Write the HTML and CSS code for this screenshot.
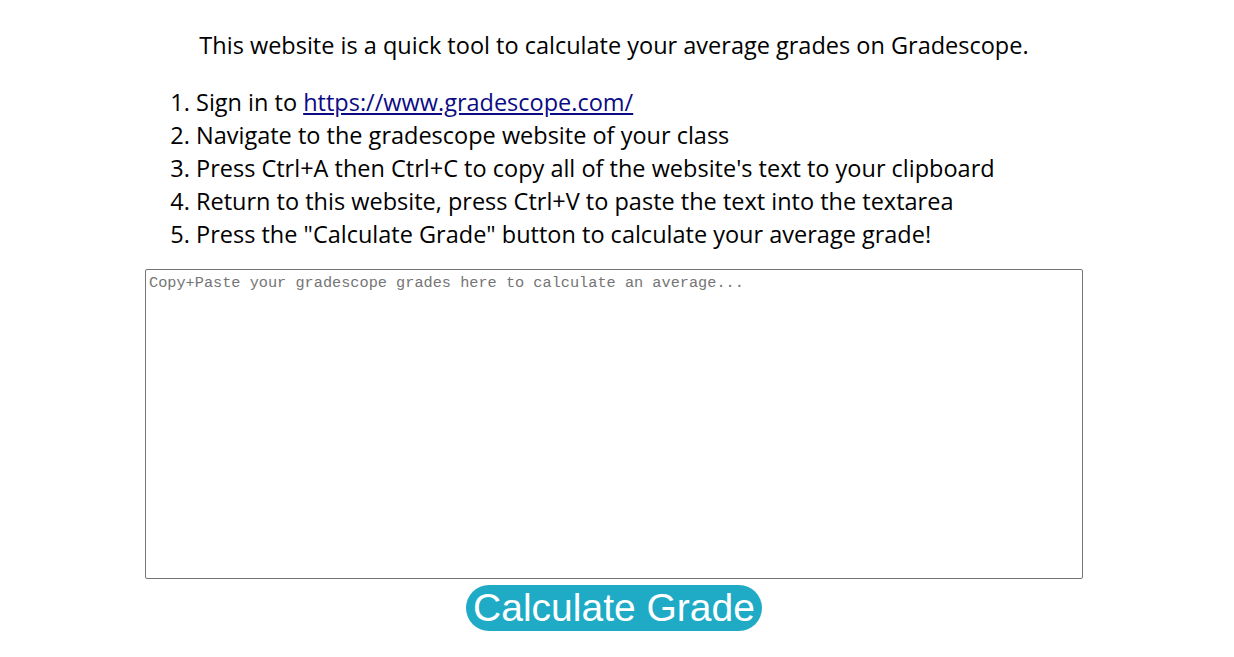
FILE: index.html
```html
<!DOCTYPE html>
<html>
<head>
<meta charset="utf-8">
<link rel="stylesheet" href="styles.css">
</head>
<body>
<main class="page">
  <p class="intro">This website is a quick tool to calculate your average grades on Gradescope.</p>
  <ol class="steps">
    <li>Sign in to <a href="#">https://www.gradescope.com/</a></li>
    <li>Navigate to the gradescope website of your class</li>
    <li>Press Ctrl+A then Ctrl+C to copy all of the website's text to your clipboard</li>
    <li>Return to this website, press Ctrl+V to paste the text into the textarea</li>
    <li>Press the "Calculate Grade" button to calculate your average grade!</li>
  </ol>
  <textarea class="grades" placeholder="Copy+Paste your gradescope grades here to calculate an average..."></textarea>
  <div class="actions">
    <button class="calc" type="button">Calculate Grade</button>
  </div>
</main>
</body>
</html>
```
FILE: styles.css
```css
html, body {
  margin: 0;
  padding: 0;
  background: #ffffff;
}
body {
  font-family: "Open Sans", "Noto Sans", sans-serif;
  color: #000000;
}
.page {
  padding: 0 6px 0 0;
  display: flex;
  flex-direction: column;
  align-items: center;
}
.intro {
  margin: 29px 0 0;
  font-size: 23.5px;
  line-height: 32px;
  text-align: center;
}
.steps {
  align-self: flex-start;
  margin: 25px 0 0 171px;
  padding: 0 0 0 25px;
  font-size: 23.5px;
  line-height: 33px;
}
.steps a {
  color: #0b0b85;
}
.grades {
  margin-top: 18px;
  width: 938px;
  height: 310px;
  box-sizing: border-box;
  border: 1px solid #767676;
  border-radius: 2px;
  padding: 4px 3px;
  font-family: "Liberation Mono", monospace;
  font-size: 15.25px;
  resize: none;
}
.grades::placeholder {
  color: #757575;
}
.actions {
  margin-top: 6px;
}
.calc {
  font-family: "Liberation Sans", Arial, sans-serif;
  font-size: 39px;
  line-height: 46px;
  padding: 0 7px;
  border: none;
  border-radius: 23px;
  background: #1fabc6;
  color: #ffffff;
}
```
